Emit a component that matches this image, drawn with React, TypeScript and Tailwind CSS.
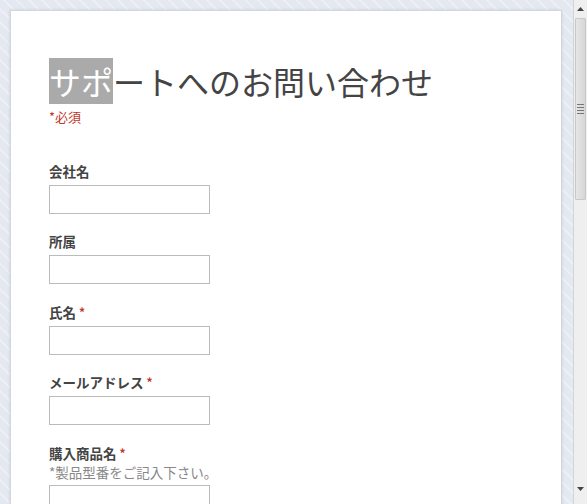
import React from "react";

const font = { fontFamily: '"Noto Sans CJK JP", "Noto Sans", sans-serif' };

type Field = { label: string; required?: boolean; hint?: string };

const fields: Field[] = [
  { label: "会社名" },
  { label: "所属" },
  { label: "氏名", required: true },
  { label: "メールアドレス", required: true },
  { label: "購入商品名", required: true, hint: "*製品型番をご記入下さい。" },
];

const Scrollbar: React.FC = () => (
  <div className="flex w-[14px] shrink-0 flex-col border-l border-[#d4d4d4] bg-[#efefef]">
    {/* up button */}
    <div className="flex h-[18px] items-center justify-center">
      <svg width="7" height="4" viewBox="0 0 7 4">
        <path d="M0 4 L3.5 0 L7 4 Z" fill="#444" />
      </svg>
    </div>
    {/* thumb */}
    <div className="mx-[1px] flex h-[182px] items-center justify-center rounded-[1px] border border-[#c8c8c8] bg-[linear-gradient(to_right,#e6e6e6,#d6d6d6)]">
      <div className="flex flex-col gap-[2px]">
        <div className="h-[1px] w-[7px] bg-[#777]" />
        <div className="h-[1px] w-[7px] bg-[#777]" />
        <div className="h-[1px] w-[7px] bg-[#777]" />
        <div className="h-[1px] w-[7px] bg-[#777]" />
      </div>
    </div>
    <div className="flex-1" />
    {/* down button */}
    <div className="flex h-[26px] items-start justify-center pt-[9px]">
      <svg width="7" height="4" viewBox="0 0 7 4">
        <path d="M0 0 L7 0 L3.5 4 Z" fill="#444" />
      </svg>
    </div>
  </div>
);

export default function App() {
  return (
    <div className="flex h-[504px] w-[587px] overflow-hidden" style={font}>
      <div className="flex-1 bg-[repeating-linear-gradient(45deg,#e4e8f1_0px,#e4e8f1_7px,#eceff5_7px,#eceff5_9px)] pl-[10px] pr-[11px] pt-[10px]">
        <div className="h-[540px] border border-[#d3d6dc] bg-white pl-[38px] pt-[51px] shadow-[0_0_3px_rgba(0,0,0,0.12)]">
          <h1 className="text-[32px] font-normal leading-[39px] text-[#444]">
            <span className="bg-[#aaaaaa] text-white">サポ</span>ートへのお問い合わせ
          </h1>
          <p className="mt-[7px] text-[13px] leading-[18px] text-[#c0392b]">*必須</p>

          <div className="mt-[35px] flex flex-col">
            {fields.map((f, i) => (
              <div
                key={f.label}
                className={`flex flex-col ${i === 0 ? "" : i % 2 === 0 ? "mt-[18px]" : "mt-[17px]"}`}
              >
                <label className="flex h-[20px] items-center overflow-hidden text-[13.5px] font-bold leading-[20px] text-[#444]">
                  {f.label}
                  {f.required && (
                    <span className="ml-[3px] text-[12px] leading-none text-[#c0392b]">*</span>
                  )}
                </label>
                {f.hint && (
                  <span className="h-[18px] text-[13.5px] leading-[18px] text-[#888]">{f.hint}</span>
                )}
                <input
                  type="text"
                  className="mt-[4px] h-[29px] w-[161px] border border-[#bbbbbb] bg-white outline-none"
                />
              </div>
            ))}
          </div>
        </div>
      </div>
      <Scrollbar />
    </div>
  );
}
